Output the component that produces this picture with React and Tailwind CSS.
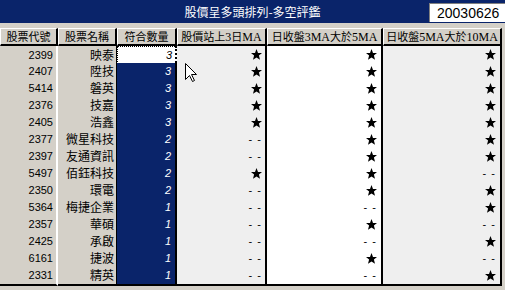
// StockTrend — "股價呈多頭排列-多空評鑑" grid, classic Win32 data-grid look.

const rows = [
  ['2399', '映泰', 3, 1, 1, 1],
  ['2407', '陞技', 3, 1, 1, 1],
  ['5414', '磐英', 3, 1, 1, 1],
  ['2376', '技嘉', 3, 1, 1, 1],
  ['2405', '浩鑫', 3, 1, 1, 1],
  ['2377', '微星科技', 2, 0, 1, 1],
  ['2397', '友通資訊', 2, 0, 1, 1],
  ['5497', '佰鈺科技', 2, 1, 1, 0],
  ['2350', '環電', 2, 0, 1, 1],
  ['5364', '梅捷企業', 1, 0, 0, 1],
  ['2357', '華碩', 1, 0, 1, 0],
  ['2425', '承啟', 1, 0, 0, 1],
  ['6161', '捷波', 1, 0, 1, 0],
  ['2331', '精英', 1, 0, 0, 1],
];

const cjk = { fontFamily: '"Noto Sans CJK TC", "Liberation Sans", sans-serif' };

function Star() {
  return (
    <svg width="11" height="11" viewBox="0 0 11 11" className="block">
      <polygon points="5.5,0 7,3.9 11,4.1 7.9,6.6 9,10.8 5.5,8.4 2,10.8 3.1,6.6 0,4.1 4,3.9" fill="#000" />
    </svg>
  );
}

function Mark({ on }) {
  if (on) return <Star />;
  return <span className="text-[11px] leading-none tracking-[1px] text-black" style={{ fontFamily: '"Liberation Sans", sans-serif' }}>- -</span>;
}

function Lat({ children }) {
  return <span className="text-[12px]" style={{ fontFamily: '"Liberation Serif", serif' }}>{children}</span>;
}

function Cursor() {
  return (
    <svg width="12" height="19" viewBox="0 0 12 19" className="absolute left-[185px] top-[63px]">
      <path d="M0.5 0.5 L0.5 16.5 L4.5 12.5 L7.5 18.5 L9.5 17.5 L6.5 11.5 L11.5 11.5 Z" fill="#fff" stroke="#000" strokeWidth="1" />
    </svg>
  );
}

export default function App() {
  const head = 'h-[18px] flex items-center justify-center border-t border-l border-t-white border-l-white border-r-2 border-r-black border-b-2 border-b-black bg-[#d4d0c8] text-[11px] text-black whitespace-nowrap overflow-hidden';
  return (
    <div className="relative w-[505px] h-[290px] bg-[#d4d0c8] overflow-hidden" style={cjk}>
      {/* Title bar */}
      <div className="h-[23px] bg-[#0a246a] grid grid-cols-[1fr_auto_1fr] items-center">
        <div />
        <div className="text-white text-[12px] leading-none">股價呈多頭排列-多空評鑑</div>
        <div className="flex justify-end items-start h-full pt-[3px]">
          <div className="w-[76px] h-[19px] bg-white border-t border-l border-[#808080] flex items-center pl-[7px] text-[14px] text-black leading-none" style={{ fontFamily: '"Liberation Sans", sans-serif' }}>20030626</div>
        </div>
      </div>
      <div className="h-[5px]" />

      {/* Grid */}
      <div className="w-[502px]">
        <div className="grid grid-cols-[58px_59px_60px_90px_116px_119px]">
          <div className={head}>股票代號</div>
          <div className={head}>股票名稱</div>
          <div className={head}>符合數量</div>
          <div className={head}>股價站上<Lat>3</Lat>日<Lat>MA</Lat></div>
          <div className={head}>日收盤<Lat>3MA</Lat>大於<Lat>5MA</Lat></div>
          <div className={head}>日收盤<Lat>5MA</Lat>大於<Lat>10MA</Lat></div>
        </div>
        {rows.map(([code, name, n, a, b, c], i) => (
          <div key={code} className="grid grid-cols-[58px_59px_60px_90px_116px_119px] h-[17px]">
            <div className="flex items-center justify-end pr-[3px] bg-[#d4d0c8] border-r-2 border-r-white border-b-2 border-b-black text-[11px] text-black" style={{ fontFamily: '"Liberation Sans", sans-serif' }}>{code}</div>
            <div className="flex items-center justify-end pr-[2px] bg-[#d4d0c8] border-r border-r-black border-b-2 border-b-black text-[12px] leading-none text-black">{name}</div>
            {i === 0 ? (
              <div className="flex items-center justify-end pr-[3px] bg-white border border-dotted border-black border-b-2 border-b-black border-r-2 border-r-black text-[11px] italic text-black" style={{ fontFamily: '"Liberation Sans", sans-serif' }}>{n}</div>
            ) : (
              <div className="flex items-center justify-end pr-[4px] bg-[#0a246a] border-r-2 border-r-black border-b-2 border-b-black text-[11px] italic text-white" style={{ fontFamily: '"Liberation Sans", sans-serif' }}>{n}</div>
            )}
            <div className="flex items-center justify-end pr-[3px] bg-[#efefef] border-r-2 border-r-black border-b-2 border-b-black"><Mark on={a} /></div>
            <div className="flex items-center justify-end pr-[4px] bg-white border-r-2 border-r-black border-b-2 border-b-black"><Mark on={b} /></div>
            <div className="flex items-center justify-end pr-[4px] bg-[#efefef] border-r-2 border-r-black border-b-2 border-b-black"><Mark on={c} /></div>
          </div>
        ))}
      </div>
      <Cursor />
    </div>
  );
}
